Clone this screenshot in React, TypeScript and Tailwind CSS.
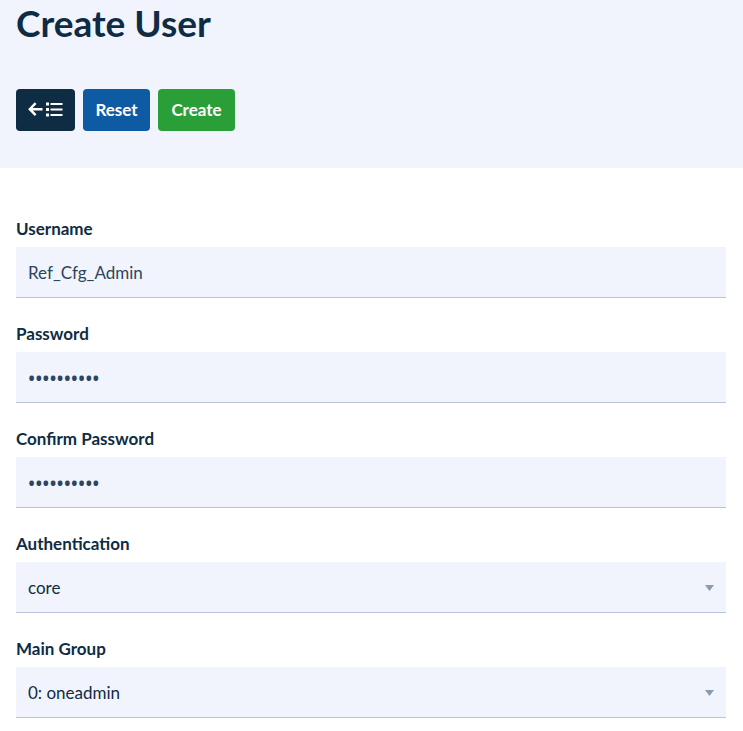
import React, { useState } from 'react';

const emptyForm = {
  username: 'Ref_Cfg_Admin',
  password: 'opennebula',
  confirm: 'opennebula',
  auth: 'core',
  group: '0',
};

const authDrivers = ['core', 'public', 'ssh', 'x509', 'ldap'];

const groups = [
  { id: '0', name: 'oneadmin' },
  { id: '1', name: 'users' },
];

const controlClass =
  'block w-full h-[51px] px-3 bg-[#f1f4fc] border-b border-[#b9c3d9] rounded-none outline-none';

type FieldProps = {
  id: string;
  label: string;
  children: React.ReactNode;
};

const Field = ({ id, label, children }: FieldProps) => (
  <div>
    <label htmlFor={id} className="block mb-1.5 leading-6 font-bold">{label}</label>
    {children}
  </div>
);

type SelectProps = {
  id: string;
  value: string;
  onChange: (value: string) => void;
  children: React.ReactNode;
};

const Select = ({ id, value, onChange, children }: SelectProps) => (
  <div className="relative">
    <select
      id={id}
      value={value}
      onChange={(e) => onChange(e.target.value)}
      className={`${controlClass} pt-0.5 appearance-none`}
    >
      {children}
    </select>
    <svg className="absolute right-3 top-[23px] w-[9px] h-1.5 fill-[#8a9bb2] pointer-events-none" viewBox="0 0 9 6">
      <path d="M0 0h9L4.5 6z" />
    </svg>
  </div>
);

const BackToListIcon = () => (
  <svg className="w-9 h-4" viewBox="0 0 36 16" fill="none" stroke="currentColor" aria-hidden="true">
    <path d="M7.6 1.2 1.8 7.2 7.6 13.2M2 7.2H14.5" strokeWidth="2.4" />
    <path d="M22.5 2H34.5M22.5 7.5H34.5M22.5 13H34.5" strokeWidth="2" />
    <path d="M18 2h3M18 7.5h3M18 13h3" strokeWidth="3" />
  </svg>
);

const CreateUserPage = () => {
  const [form, setForm] = useState(emptyForm);
  const update = (key: string, value: string) => setForm({ ...form, [key]: value });

  return (
    <div className="min-h-screen bg-white text-[#0e2c44] text-[17px] font-[Lato,sans-serif]">
      {/* Header */}
      <header className="bg-[#f1f4fc] px-4 pb-[37px]">
        <h1 className="text-[37px] leading-[46px] font-bold">Create User</h1>
        <div className="mt-[43px] flex gap-2 font-bold text-white">
          <button type="button" aria-label="Back to list" className="h-[42px] w-[59px] flex items-center justify-center rounded bg-[#0e2c44]">
            <BackToListIcon />
          </button>
          <button type="button" onClick={() => setForm(emptyForm)} className="h-[42px] w-[67px] rounded bg-[#0f5ba3]">
            Reset
          </button>
          <button type="submit" form="create-user" className="h-[42px] w-[77px] rounded bg-[#2a9f38]">
            Create
          </button>
        </div>
      </header>

      {/* Form */}
      <form
        id="create-user"
        onSubmit={(e) => e.preventDefault()}
        className="flex flex-col gap-6 pl-4 pr-[17px] pt-[49px] pb-3"
      >
        <Field id="username" label="Username">
          <input
            id="username"
            type="text"
            value={form.username}
            onChange={(e) => update('username', e.target.value)}
            className={`${controlClass} text-[#2c4560]`}
          />
        </Field>
        <Field id="password" label="Password">
          <input
            id="password"
            type="password"
            value={form.password}
            onChange={(e) => update('password', e.target.value)}
            className={`${controlClass} pt-1 text-[#2c4560] text-[19px] font-semibold font-['Open_Sans',sans-serif]`}
          />
        </Field>
        <Field id="confirm" label="Confirm Password">
          <input
            id="confirm"
            type="password"
            value={form.confirm}
            onChange={(e) => update('confirm', e.target.value)}
            className={`${controlClass} pt-1 text-[#2c4560] text-[19px] font-semibold font-['Open_Sans',sans-serif]`}
          />
        </Field>
        <Field id="auth" label="Authentication">
          <Select id="auth" value={form.auth} onChange={(value) => update('auth', value)}>
            {authDrivers.map((driver) => (
              <option key={driver} value={driver}>{driver}</option>
            ))}
          </Select>
        </Field>
        <Field id="group" label="Main Group">
          <Select id="group" value={form.group} onChange={(value) => update('group', value)}>
            {groups.map((group) => (
              <option key={group.id} value={group.id}>{`${group.id}: ${group.name}`}</option>
            ))}
          </Select>
        </Field>
      </form>
    </div>
  );
};

export default CreateUserPage;
